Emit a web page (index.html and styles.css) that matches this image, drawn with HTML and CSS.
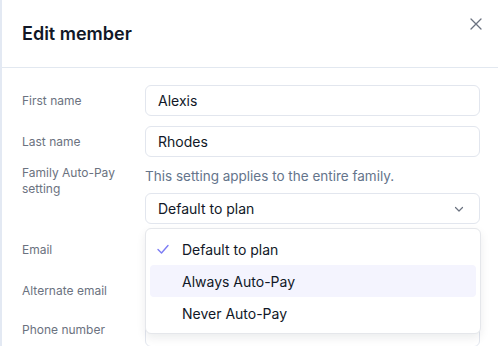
FILE: index.html
```html
<!DOCTYPE html>
<html lang="en">
<head>
    <meta charset="UTF-8">
    <meta name="viewport" content="width=device-width, initial-scale=1">
    <title>Edit member</title>
    <link rel="stylesheet" href="styles.css">
</head>
<body>

    <div class="panel">
        <div class="panel-header">
            <h2>Edit member</h2>
            <button class="close" aria-label="Close">
                <svg width="12" height="12" viewBox="0 0 12 12"><path d="M1 1L11 11M11 1L1 11" stroke="#6b7280" stroke-width="1.3" stroke-linecap="round"/></svg>
            </button>
        </div>

        <form class="form">
            <label class="label">First name</label>
            <div class="field"><input class="input" value="Alexis"></div>

            <label class="label">Last name</label>
            <div class="field"><input class="input" value="Rhodes"></div>

            <label class="label label-top">Family Auto-Pay setting</label>
            <div class="field">
                <p class="help">This setting applies to the entire family.</p>
                <div class="select-wrap">
                    <div class="select">
                        <span>Default to plan</span>
                        <svg width="12" height="12" viewBox="0 0 12 12"><path d="M2.5 4.5L6 8L9.5 4.5" fill="none" stroke="#6b7280" stroke-width="1.2" stroke-linecap="round" stroke-linejoin="round"/></svg>
                    </div>
                    <ul class="menu">
                        <li class="option selected">
                            <svg class="check" width="14" height="14" viewBox="0 0 14 14"><path d="M2 7.5L5.5 11L12 3.5" fill="none" stroke="#7c7cf4" stroke-width="1.4" stroke-linecap="round" stroke-linejoin="round"/></svg>
                            Default to plan
                        </li>
                        <li class="option active">Always Auto-Pay</li>
                        <li class="option">Never Auto-Pay</li>
                    </ul>
                </div>
            </div>

            <label class="label">Email</label>
            <div class="field"><input class="input"></div>

            <label class="label">Alternate email</label>
            <div class="field"><input class="input"></div>

            <label class="label label-last">Phone number</label>
            <div class="field"><input class="input"></div>
        </form>
    </div>

</body>
</html>
```

FILE: styles.css
```css
body {
    margin: 0;
    background-color: #ffffff;
    font-family: Inter, "Noto Sans", sans-serif;
    color: #111827;
    overflow: hidden;
}

.panel {
    height: 346px;
    border-left: 2px solid #e3e9f3;
    box-sizing: border-box;
}

/* Header */
.panel-header {
    height: 68px;
    border-bottom: 1px solid #e2e8f0;
    box-sizing: border-box;
    position: relative;
    padding: 22px 20px 0 20px;
}

.panel-header h2 {
    margin: 0;
    font-size: 18px;
    font-weight: 600;
    line-height: 24px;
    color: #111827;
}

.close {
    position: absolute;
    top: 18px;
    right: 16px;
    width: 12px;
    height: 12px;
    padding: 0;
    border: none;
    background: none;
    cursor: pointer;
    display: flex;
}

/* Form */
.form {
    display: grid;
    grid-template-columns: 123px 1fr;
    row-gap: 10px;
    padding: 17px 18px 0 20px;
}

.label {
    font-size: 12px;
    color: #6b7280;
    display: flex;
    align-items: center;
    line-height: 16px;
}

.label-top {
    align-items: flex-start;
    margin-top: -2px;
    padding-right: 30px;
}

.label-last {
    margin-top: -4px;
}

.input {
    width: 100%;
    height: 31px;
    box-sizing: border-box;
    border: 1px solid #e2e6ee;
    border-radius: 6px;
    padding: 0 12px;
    font-family: inherit;
    font-size: 14px;
    color: #111827;
    outline: none;
}

.help {
    margin: 0 0 8px 0;
    font-size: 13.5px;
    line-height: 18px;
    color: #64748b;
}

.select-wrap {
    position: relative;
}

.select {
    height: 31px;
    box-sizing: border-box;
    border: 1px solid #e2e6ee;
    border-radius: 6px;
    padding: 0 14px 0 12px;
    display: flex;
    align-items: center;
    justify-content: space-between;
    font-size: 14px;
}

/* Dropdown menu */
.menu {
    position: absolute;
    top: 35px;
    left: 0;
    right: -1px;
    margin: 0;
    padding: 4px;
    list-style: none;
    background: #ffffff;
    border: 1px solid #e5e7eb;
    border-radius: 6px;
    box-shadow: 0 4px 10px rgba(15, 23, 42, 0.08);
    z-index: 2;
}

.option {
    height: 32px;
    display: flex;
    align-items: center;
    padding-left: 32px;
    position: relative;
    font-size: 14px;
    border-radius: 4px;
    color: #111827;
}

.option.active {
    background-color: #f4f4fe;
}

.check {
    position: absolute;
    left: 6px;
    top: 9px;
}
```
